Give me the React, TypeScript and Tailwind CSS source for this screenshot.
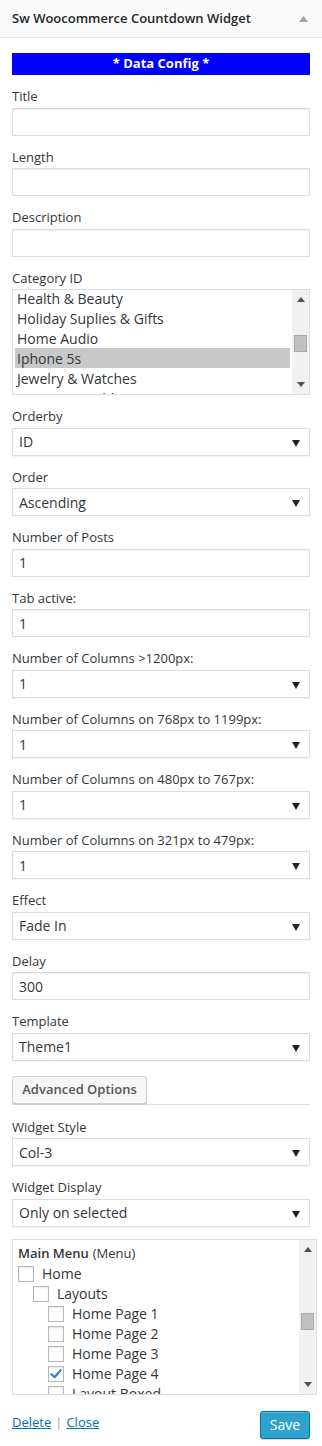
import React from "react";

const font = { fontFamily: '"Open Sans", "Liberation Sans", sans-serif' };

function Label({ children }: { children: React.ReactNode }) {
  return <div className="block text-[13px] leading-[19.5px] text-[#32373c]">{children}</div>;
}

function TextField({ label, value = "" }: { label: string; value?: string }) {
  return (
    <div className="mb-[12px]">
      <Label>{label}</Label>
      <div className="my-px flex h-[28px] w-full items-center border border-[#dddddd] bg-white px-[6px] text-[14px] text-[#32373c] shadow-[inset_0_1px_2px_rgba(0,0,0,0.07)]">
        {value}
      </div>
    </div>
  );
}

function Arrow() {
  return (
    <svg width="8" height="7" viewBox="0 0 8 7" className="absolute right-[9px] top-[11px]">
      <polygon points="0,0 8,0 4,7" fill="#222" />
    </svg>
  );
}

function SelectField({ label, value }: { label: string; value: string }) {
  return (
    <div className="mb-[12px]">
      <Label>{label}</Label>
      <div className="relative my-px flex h-[28px] w-full items-center border border-[#dddddd] bg-white px-[6px] text-[14px] text-[#32373c] shadow-[0_1px_1px_rgba(0,0,0,0.04)]">
        {value}
        <Arrow />
      </div>
    </div>
  );
}

function ScrollBar({ thumbTop }: { thumbTop: number }) {
  return (
    <div className="relative flex h-full w-[17px] shrink-0 flex-col items-center justify-between bg-[#f1f1f1] py-[7px]">
      <svg width="8" height="5" viewBox="0 0 8 5">
        <polygon points="0,5 8,5 4,0" fill="#505050" />
      </svg>
      <svg width="8" height="5" viewBox="0 0 8 5">
        <polygon points="0,0 8,0 4,5" fill="#505050" />
      </svg>
      <div
        className="absolute left-[2px] h-[17px] w-[13px] border border-[#a9a9a9] bg-[#c1c1c1]"
        style={{ top: thumbTop }}
      />
    </div>
  );
}

function Checkbox({ checked = false }: { checked?: boolean }) {
  return (
    <div className="relative h-[16px] w-[16px] shrink-0 border border-[#b4b9be] bg-white shadow-[inset_0_1px_2px_rgba(0,0,0,0.1)]">
      {checked && (
        <svg width="16" height="16" viewBox="0 0 16 16" className="absolute -left-px -top-px">
          <path d="M3.5 8.2 L6.6 11.2 L12.6 4.2" fill="none" stroke="#1e8cbe" strokeWidth="2.2" strokeLinecap="round" strokeLinejoin="round" />
        </svg>
      )}
    </div>
  );
}

function MenuRow({ indent, label, checked = false }: { indent: number; label: string; checked?: boolean }) {
  return (
    <div className="flex h-[20px] items-center text-[14px] text-[#32373c]" style={{ paddingLeft: indent }}>
      <Checkbox checked={checked} />
      <span className="ml-[8px]">{label}</span>
    </div>
  );
}

export default function App() {
  const categories = ["Health & Beauty", "Holiday Suplies & Gifts", "Home Audio", "Iphone 5s", "Jewelry & Watches", "Laptops & Tablets"];
  return (
    <div style={font} className="min-h-[1446px] w-[322px] bg-white">
      <div className="flex h-[38px] items-center justify-between border-b border-[#e5e5e5] bg-[#fafafa] pl-[12px] pr-[14px]">
        <span className="text-[13px] font-semibold text-[#23282d]">Sw Woocommerce Countdown Widget</span>
        <svg width="9" height="6" viewBox="0 0 9 6">
          <polygon points="0,6 9,6 4.5,0" fill="#a0a5aa" />
        </svg>
      </div>

      <div className="px-[12px] pt-[15px]">
        <div className="mb-[12px] flex h-[22px] items-center justify-center bg-[#0000ff] text-[13px] font-bold text-white">
          * Data Config *
        </div>

        <TextField label="Title" />
        <TextField label="Length" />
        <TextField label="Description" />

        <div className="mb-[12px]">
          <Label>Category ID</Label>
          <div className="my-px flex h-[106px] w-full overflow-hidden border border-[#dddddd] bg-white">
            <div className="flex-1 overflow-hidden pl-[2px] pr-[2px]">
              <div className="-mt-[2px]">
                {categories.map((c) => (
                  <div
                    key={c}
                    className={`flex h-[20px] items-center px-[2px] text-[14px] text-[#32373c] ${c === "Iphone 5s" ? "bg-[#c8c8c8]" : ""}`}
                  >
                    {c}
                  </div>
                ))}
              </div>
            </div>
            <ScrollBar thumbTop={45} />
          </div>
        </div>

        <SelectField label="Orderby" value="ID" />
        <SelectField label="Order" value="Ascending" />
        <TextField label="Number of Posts" value="1" />
        <TextField label="Tab active:" value="1" />
        <SelectField label="Number of Columns >1200px:" value="1" />
        <SelectField label="Number of Columns on 768px to 1199px:" value="1" />
        <SelectField label="Number of Columns on 480px to 767px:" value="1" />
        <SelectField label="Number of Columns on 321px to 479px:" value="1" />
        <SelectField label="Effect" value="Fade In" />
        <TextField label="Delay" value="300" />
        <SelectField label="Template" value="Theme1" />

        <div className="mt-[15px] border-b border-[#dddddd]">
          <button className="h-[28px] w-[135px] rounded-[3px] border border-[#cccccc] bg-[#f7f7f7] text-[13px] font-semibold text-[#555555] shadow-[0_1px_0_#cccccc]">
            Advanced Options
          </button>
        </div>

        <div className="mt-[13px]">
          <SelectField label="Widget Style" value="Col-3" />
          <SelectField label="Widget Display" value="Only on selected" />
        </div>

        <div className="flex h-[156px] w-[305px] overflow-hidden border border-[#dddddd] bg-white">
          <div className="flex-1 overflow-hidden pl-[5px] pt-[4px]">
            <div className="flex h-[20px] items-center text-[13px] text-[#32373c]">
              <span className="font-semibold">Main Menu</span>
              <span className="ml-[4px]">(Menu)</span>
            </div>
            <MenuRow indent={0} label="Home" />
            <MenuRow indent={15} label="Layouts" />
            <MenuRow indent={30} label="Home Page 1" />
            <MenuRow indent={30} label="Home Page 2" />
            <MenuRow indent={30} label="Home Page 3" />
            <MenuRow indent={30} label="Home Page 4" checked />
            <MenuRow indent={30} label="Layout Boxed" />
          </div>
          <ScrollBar thumbTop={73} />
        </div>

        <div className="mt-[16px] flex items-start justify-between">
          <div className="pt-[2px] text-[13px] leading-[19.5px]">
            <a className="text-[#0073aa] underline">Delete</a>
            <span className="mx-[4px] text-[#a0a5aa]">|</span>
            <a className="text-[#0073aa] underline">Close</a>
          </div>
          <button className="h-[28px] w-[50px] rounded-[3px] border border-[#0074a2] bg-[#2ea2cc] text-[14px] text-white shadow-[inset_0_1px_0_rgba(120,200,230,0.5),0_1px_0_rgba(0,0,0,0.15)]">
            Save
          </button>
        </div>
      </div>
    </div>
  );
}
